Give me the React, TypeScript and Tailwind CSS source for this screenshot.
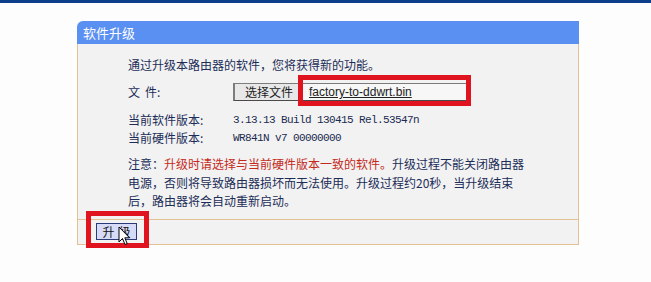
export default function App() {
  const cjk = { fontFamily: '"Noto Sans CJK SC", "Liberation Sans", sans-serif' };
  const mono = { fontFamily: '"Liberation Mono", "DejaVu Sans Mono", monospace' };

  return (
    <div className="relative w-[651px] h-[282px] overflow-hidden bg-[#fdfdfd]" style={cjk}>
      <div className="h-[3px] bg-[#0c3e8a]" />

      <div className="mt-[18px] ml-[77px] w-[502px]">
        <div className="h-[23px] rounded-tl-[6px] bg-[#5b90f3] pl-[6px] flex items-center text-[13px] text-white">
          软件升级
        </div>

        <div className="border-x border-[#e3c192] bg-[#f2f2f2] pl-[50px] pt-[12px] pb-[8px] text-[12px] text-[#1c2d58]">
          <div className="leading-[18px]">通过升级本路由器的软件，您将获得新的功能。</div>

          <div className="mt-[9px] flex h-[18px] items-center">
            <div className="w-[105px]">
              文<span className="ml-[5px]">件:</span>
            </div>
            <div className="flex h-[18px] w-[234px] items-stretch border border-l-2 border-[#7c7c7c] border-b-[#4a4a4a] bg-[#f7f7f7]">
              <div className="flex items-center bg-[#e8e8e8] px-[10px] text-[#222]">选择文件</div>
              <div
                className="flex items-center pl-[6px] text-[12px] text-[#222] underline"
                style={{ fontFamily: '"Liberation Sans", Arial, sans-serif' }}
              >
                factory-to-ddwrt.bin
              </div>
            </div>
          </div>

          <div className="mt-[10px] flex leading-[18px]">
            <div className="w-[105px]">当前软件版本:</div>
            <div className="text-[11px] tracking-[-0.6px] text-[#1a2a50]" style={mono}>
              3.13.13 Build 130415 Rel.53547n
            </div>
          </div>
          <div className="flex leading-[18px]">
            <div className="w-[105px]">当前硬件版本:</div>
            <div className="text-[11px] tracking-[-0.6px] text-[#1a2a50]" style={mono}>
              WR841N v7 00000000
            </div>
          </div>

          <div className="mt-[8px] leading-[18.5px]">
            <span>注意：</span>
            <span className="text-[#c42a1c]">升级时请选择与当前硬件版本一致的软件。</span>
            升级过程不能关闭路由器
            <br />
            电源，否则将导致路由器损坏而无法使用。升级过程约20秒，当升级结束
            <br />
            后，路由器将会自动重新启动。
          </div>
        </div>

        <div className="flex h-[26px] items-center border border-[#e3c192] bg-[#f2f2f2] pl-[18px]">
          <button className="flex h-[17px] w-[41px] items-center justify-center border border-[#2c3a78] bg-[#d6dbf7] text-[12px] text-[#111]">
            升<span className="ml-[4px]">级</span>
          </button>
        </div>
      </div>

      {/* red annotation boxes */}
      <div className="absolute left-[298px] top-[75px] h-[31px] w-[173px] border-[5px] border-[#e0141e]" />
      <div className="absolute left-[86px] top-[211px] h-[37px] w-[63px] border-[5px] border-[#e0141e]" />

      {/* mouse cursor */}
      <svg className="absolute left-[118px] top-[226px]" width="13" height="21" viewBox="0 0 13 21">
        <path
          d="M1 1 L1 16 L4.5 12.5 L7 18.5 L9.2 17.6 L6.8 11.8 L11.5 11.8 Z"
          fill="#fff"
          stroke="#000"
          strokeWidth="1"
          strokeLinejoin="miter"
        />
      </svg>
    </div>
  );
}
